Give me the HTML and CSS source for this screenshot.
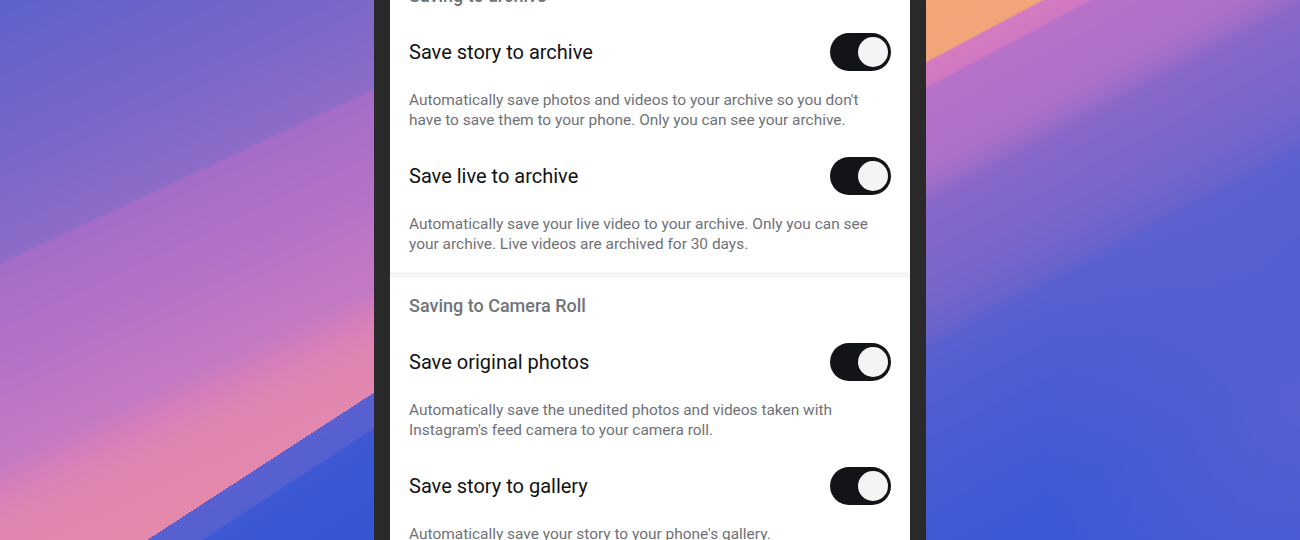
FILE: index.html
```html
<!DOCTYPE html>
<html lang="en">
<head>
<meta charset="utf-8">
<title>Archiving and downloading</title>
<link rel="stylesheet" href="styles.css">
</head>
<body>
<div class="stage">
  <div class="phone">
    <div class="screen">
      <section class="group">
        <h2 class="group-title">Saving to archive</h2>
        <div class="item">
          <div class="item-row">
            <span class="item-title">Save story to archive</span>
            <span class="toggle"><span class="knob"></span></span>
          </div>
          <p class="item-desc">Automatically save photos and videos to your archive so you don't have to save them to your phone. Only you can see your archive.</p>
        </div>
        <div class="item">
          <div class="item-row">
            <span class="item-title">Save live to archive</span>
            <span class="toggle"><span class="knob"></span></span>
          </div>
          <p class="item-desc">Automatically save your live video to your archive. Only you can see your archive. Live videos are archived for 30 days.</p>
        </div>
      </section>
      <div class="divider"></div>
      <section class="group">
        <h2 class="group-title">Saving to Camera Roll</h2>
        <div class="item">
          <div class="item-row">
            <span class="item-title">Save original photos</span>
            <span class="toggle"><span class="knob"></span></span>
          </div>
          <p class="item-desc">Automatically save the unedited photos and videos taken with Instagram's feed camera to your camera roll.</p>
        </div>
        <div class="item">
          <div class="item-row">
            <span class="item-title">Save story to gallery</span>
            <span class="toggle"><span class="knob"></span></span>
          </div>
          <p class="item-desc">Automatically save your story to your phone's gallery.</p>
        </div>
      </section>
    </div>
  </div>
</div>
</body>
</html>
```

FILE: styles.css
```css
* { box-sizing: border-box; }

html, body {
  margin: 0;
  padding: 0;
}

body {
  width: 1300px;
  height: 540px;
  overflow: hidden;
  font-family: Roboto, "Liberation Sans", Arial, sans-serif;
  background:
    /* left: blue corner */
    linear-gradient(147deg, rgba(0,0,0,0) 533px, #5a60d0 533px, #5560d0 562px, #3c58d2 564px, #3556d2 656px) left top / 374px 540px no-repeat,
    /* left: bands */
    linear-gradient(155deg, #5e62cc 0px, #7466c8 120px, #8e6cc8 238px, #a46cc8 240px, #b472c6 330px, #c47ac2 420px, #d67eba 445px, #de84b2 470px, #e68aaa 560px, #e88aa8 648px) left top / 374px 540px no-repeat,
    /* right: lower right purple tint */
    radial-gradient(ellipse 260px 320px at 100% 75%, rgba(112,100,206,0.55), rgba(112,100,206,0)) right top / 374px 540px no-repeat,
    /* right: bands */
    linear-gradient(152deg, #f4a676 0px, #f2a47a 54px, #d47ac0 56px, #d078c2 76px, #b672c8 79px, #ac70c8 150px, #9a6cc8 168px, #8868c8 182px, #7866ca 260px, #6a64cc 295px, #5a60d0 310px, #4a5cd2 400px, #3c5ad4 500px, #3858d6 652px) right top / 374px 540px no-repeat,
    #6a64cc;
}

.stage {
  height: 540px;
  display: flex;
  justify-content: center;
  overflow: hidden;
}

.phone {
  width: 552px;
  height: 540px;
  padding: 0 16px;
  background: #2a2a2a;
  overflow: hidden;
}

.screen {
  background: #ffffff;
  margin-top: -32px;
  min-height: 620px;
}

.group {
  padding: 18px 19px 18px 19px;
}

.group-title {
  margin: 0;
  font-size: 18px;
  line-height: 20px;
  font-weight: 500;
  color: #717378;
}

.item {
  padding-top: 27px;
}

.item-row {
  display: flex;
  align-items: center;
  justify-content: space-between;
  height: 38px;
}

.item-title {
  font-size: 20px;
  line-height: 24px;
  color: #121212;
}

.toggle {
  width: 61px;
  height: 38px;
  border-radius: 19px;
  background: #121418;
  display: flex;
  align-items: center;
  justify-content: flex-end;
  padding: 0 3px;
}

.knob {
  width: 30px;
  height: 30px;
  border-radius: 50%;
  background: #f4f4f4;
}

.item-desc {
  margin: 19px 0 0 0;
  max-width: 474px;
  font-size: 15.45px;
  line-height: 20px;
  color: #6f7177;
}

.divider {
  height: 6px;
  background: #f6f6f6;
}
```
